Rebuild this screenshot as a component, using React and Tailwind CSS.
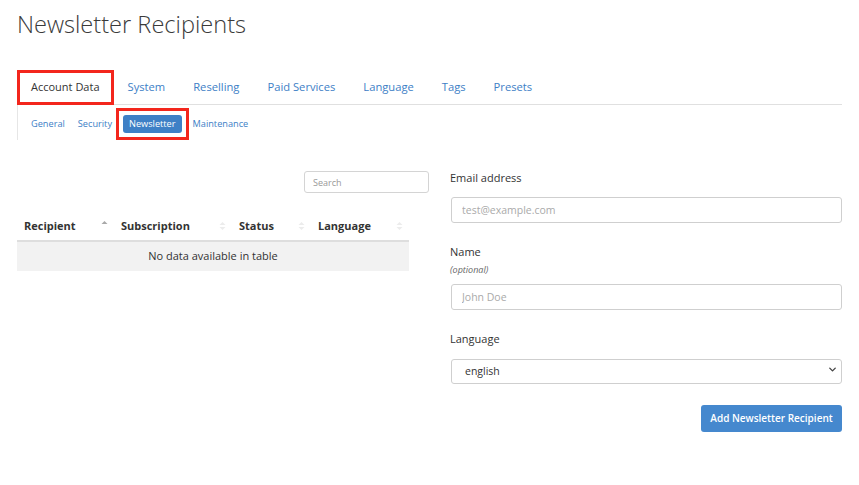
import { ChevronDown } from "lucide-react";

const TABS = ["System", "Reselling", "Paid Services", "Language", "Tags", "Presets"];

const COLUMNS = [
  { label: "Recipient", width: "w-[97px]", active: true },
  { label: "Subscription", width: "w-[118px]" },
  { label: "Status", width: "w-[79px]" },
  { label: "Language", width: "w-[98px]" },
];

function SortIcon({ active }) {
  if (active) {
    return (
      <svg width="7" height="10" viewBox="0 0 7 10" className="mb-[3px]">
        <path d="M0.5 4 L3.5 1 L6.5 4 Z" fill="#a9a9a9" />
      </svg>
    );
  }
  return (
    <svg width="7" height="10" viewBox="0 0 7 10">
      <path d="M0.5 4 L3.5 1 L6.5 4 Z" fill="#ececec" />
      <path d="M0.5 6 L3.5 9 L6.5 6 Z" fill="#ececec" />
    </svg>
  );
}

function Field({ label, hint, children }) {
  return (
    <div>
      <label className="block text-[11px] leading-4 text-[#333]">{label}</label>
      {hint && <p className="text-[9px] italic leading-3 text-[#666] mt-[4px]">{hint}</p>}
      <div className={hint ? "mt-[7px]" : "mt-[10px]"}>{children}</div>
    </div>
  );
}

export default function App() {
  return (
    <div className="min-h-screen bg-white px-[17px] font-['Open_Sans',sans-serif] text-[#333]">
      <h1 className="pt-[10px] text-[23.6px] leading-[29px] font-light text-[#3a3a3a]">
        Newsletter Recipients
      </h1>

      {/* main tabs */}
      <div className="mt-[31px] flex items-end border-b border-[#e0e0e0]">
        <div className="-mb-px flex h-[35px] items-center border-[3px] border-[#f3261c] pl-[11px] pr-[11px] text-[11px] text-[#333]">
          Account Data
        </div>
        {TABS.map((t) => (
          <a key={t} className="flex h-[34px] items-center px-[14px] text-[11.2px] text-[#3d80c6]">
            {t}
          </a>
        ))}
      </div>

      {/* sub tabs */}
      <div className="flex h-[35px] items-start border-l border-[#e6e6e6] pl-[13px] pt-[3px] text-[9.2px]">
        <div className="flex h-[32px] items-center">
          <a className="text-[#3d80c6]">General</a>
          <a className="ml-[13px] text-[#3d80c6]">Security</a>
          <div className="ml-[4px] border-[3px] border-[#f3261c] p-[4px]">
            <span className="flex h-[18px] items-center rounded-[3px] bg-[#3e80c6] px-[6px] text-white">
              Newsletter
            </span>
          </div>
          <a className="ml-[4px] text-[#3d80c6]">Maintenance</a>
        </div>
      </div>

      <div className="mt-[31px] flex gap-[21px]">
        {/* table */}
        <div className="w-[413px]">
          <div className="flex justify-end">
            <input
              placeholder="Search"
              className="h-[22px] w-[125px] rounded-[3px] border border-[#d4d4d4] px-[8px] text-[9px] placeholder:text-[#999] outline-none"
            />
          </div>
          <div className="mt-[19px] w-[392px]">
            <div className="flex h-[30px] items-center border-b-2 border-[#dedede]">
              {COLUMNS.map((c) => (
                <div key={c.label} className={`${c.width} flex items-center justify-between pl-[7px] pr-[6px]`}>
                  <span className="text-[11px] font-bold">{c.label}</span>
                  <SortIcon active={c.active} />
                </div>
              ))}
            </div>
            <div className="flex h-[29px] items-center justify-center bg-[#f2f2f2] text-[11px]">
              No data available in table
            </div>
          </div>
        </div>

        {/* form */}
        <div className="-mt-px flex flex-1 flex-col gap-[21px]">
          <Field label="Email address">
            <input
              placeholder="test@example.com"
              className="ml-px h-[26px] w-[391px] rounded-[3px] border border-[#cfcfcf] px-[10px] text-[10.5px] placeholder:text-[#aaa] outline-none"
            />
          </Field>
          <Field label="Name" hint="(optional)">
            <input
              placeholder="John Doe"
              className="ml-px h-[26px] w-[391px] rounded-[3px] border border-[#cfcfcf] px-[10px] text-[10.5px] placeholder:text-[#aaa] outline-none"
            />
          </Field>
          <Field label="Language">
            <div className="relative ml-px w-[391px]">
              <select className="h-[25px] w-full appearance-none rounded-[3px] border border-[#cfcfcf] bg-white pl-[13px] text-[10.5px] text-[#333] outline-none">
                <option>english</option>
              </select>
              <ChevronDown
                size={11}
                strokeWidth={3}
                className="pointer-events-none absolute right-[4px] top-[7px] text-[#444]"
              />
            </div>
          </Field>
          <div className="flex justify-end">
            <button className="h-[27px] w-[141px] rounded-[3px] bg-[#4588ce] text-[10px] font-semibold text-white">
              Add Newsletter Recipient
            </button>
          </div>
        </div>
      </div>
    </div>
  );
}
